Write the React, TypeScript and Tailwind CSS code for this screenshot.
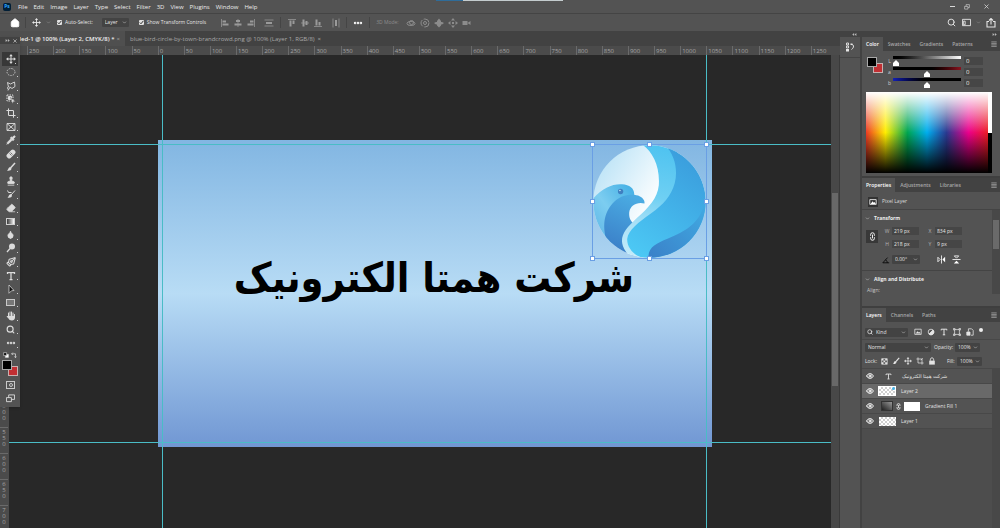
import { clsx } from "clsx";
import {
  ChevronDown,
  Crop,
  Droplet,
  Ellipsis,
  Eraser,
  Eye,
  House,
  Link2,
  PenTool,
  Pipette,
  Search,
  Stamp,
} from "lucide-react";
import type { ReactNode } from "react";

const MENUS = ["File", "Edit", "Image", "Layer", "Type", "Select", "Filter", "3D", "View", "Plugins", "Window", "Help"];

// ruler labels, one every 50 px of the document
const H_MARKS = Array.from({ length: 31 }, (_, i) => Math.abs(i * 50 - 250));
const V_MARKS = Array.from({ length: 18 }, (_, i) => Math.abs(i * 50 - 150));

const TITLE = "شرکت همتا الکترونیک";

function Glyph({ children, className }: { children: ReactNode; className?: string }) {
  return (
    <svg viewBox="0 0 20 20" fill="none" stroke="currentColor" strokeWidth="2" className={clsx("shrink-0", className ?? "size-[10px]")}>
      {children}
    </svg>
  );
}

function MoveIcon({ className }: { className?: string }) {
  return (
    <Glyph className={className}>
      <path d="M10 3v14M3 10h14" />
      <path d="M10 0l3.500 4.500h-7zM10 20l3.500-4.500h-7zM0 10l4.500-3.500v7zM20 10l-4.500-3.500v7z" fill="currentColor" stroke="none" />
    </Glyph>
  );
}

function TypeIcon({ className }: { className?: string }) {
  return (
    <Glyph className={className}>
      <path d="M3 6V3h14v3M10 3v14M7 17h6" strokeWidth="2.500" />
    </Glyph>
  );
}

function BrushIcon({ className }: { className?: string }) {
  return (
    <Glyph className={className}>
      <path d="M18 2L9 12" strokeWidth="3" />
      <path d="M8 10l3 3c0 4-5 5-9 4 3-1 2-6 6-7z" fill="currentColor" stroke="none" />
    </Glyph>
  );
}

function MenuLines() {
  return (
    <button type="button" aria-label="Panel menu" className="mr-[3px] ml-auto text-[#a8a8a8]">
      <Glyph className="size-[6px]">
        <path d="M1 3h18M1 8h18M1 13h18M1 18h18" strokeWidth="2.500" />
      </Glyph>
    </button>
  );
}

function DoubleArrow({ flip }: { flip?: boolean }) {
  return (
    <svg viewBox="0 0 12 8" fill="currentColor" className={clsx("h-[3px] w-[5px]", flip && "rotate-180")}>
      <path d="M5 0v8L0 4zM11 0v8L6 4z" />
    </svg>
  );
}

const TOOLS: { name: string; icon: ReactNode; active?: boolean }[] = [
  { name: "Move", icon: <MoveIcon />, active: true },
  {
    name: "Elliptical marquee",
    icon: (
      <Glyph>
        <ellipse cx="10" cy="10" rx="8" ry="7" strokeDasharray="3 2" strokeWidth="1.500" />
      </Glyph>
    ),
  },
  {
    name: "Lasso",
    icon: (
      <Glyph>
        <path d="M5 12L3 3l6 3 8-4 1 9-6 4-4-3M5 12c-3 0-3 4 0 4s4-4 1-4M5 16l-1 3" strokeWidth="1.800" />
      </Glyph>
    ),
  },
  {
    name: "Object selection",
    icon: (
      <Glyph>
        <path d="M2 2h12v12H2z" strokeDasharray="3 2" />
        <path d="M5 5h6v6H5z" fill="currentColor" />
        <path d="M9 7l10 8-4 .500-2 4z" fill="currentColor" stroke="#535353" strokeWidth="1" />
      </Glyph>
    ),
  },
  { name: "Crop", icon: <Crop className="size-[10px]" strokeWidth={2.5} /> },
  {
    name: "Frame",
    icon: (
      <Glyph>
        <path d="M2 3h16v14H2zM2 3l16 14M18 3L2 17" strokeWidth="1.800" />
      </Glyph>
    ),
  },
  { name: "Eyedropper", icon: <Pipette className="size-[10px] fill-current" /> },
  {
    name: "Healing brush",
    icon: (
      <Glyph>
        <rect x="0" y="5" width="20" height="10" rx="4" fill="currentColor" stroke="none" transform="rotate(-45 10 10)" />
        <path d="M7 9l4 4M9 7l4 4" stroke="#535353" strokeWidth="1.500" />
      </Glyph>
    ),
  },
  { name: "Brush", icon: <BrushIcon /> },
  { name: "Clone stamp", icon: <Stamp className="size-[10px] fill-current" /> },
  {
    name: "History brush",
    icon: (
      <Glyph>
        <path d="M18 3l-8 9M3 3l2 4h6" />
        <path d="M9 10l3 3c0 4-5 5-9 4 3-1 2-6 6-7z" fill="currentColor" stroke="none" />
      </Glyph>
    ),
  },
  { name: "Eraser", icon: <Eraser className="size-[10px] fill-current stroke-[#cfcfcf]" /> },
  { name: "Gradient", icon: <span className="h-[7px] w-[9px] border border-[#d0d0d0] bg-linear-to-r from-[#3a3a3a] to-white" /> },
  { name: "Blur", icon: <Droplet className="size-[9px] fill-current" /> },
  {
    name: "Dodge",
    icon: (
      <Glyph>
        <circle cx="12" cy="7" r="6" fill="currentColor" stroke="none" />
        <path d="M8 11l-6 7" strokeWidth="2.500" />
      </Glyph>
    ),
  },
  { name: "Pen", icon: <PenTool className="size-[10px] rotate-90" strokeWidth={2.5} /> },
  { name: "Type", icon: <TypeIcon /> },
  {
    name: "Path selection",
    icon: (
      <Glyph>
        <path d="M6 2l10 11-5 .500-5 5z" fill="#111" strokeWidth="1.500" />
      </Glyph>
    ),
  },
  { name: "Rectangle", icon: <span className="h-[7px] w-[9px] border border-[#c8c8c8] bg-[#777]" /> },
  {
    name: "Hand",
    icon: (
      <Glyph>
        <path d="M5 11V4M8 10V2M11 10V2M14 11V4M17 12V7" strokeLinecap="round" />
        <path d="M4 10h14v3c0 4-3 6-6 6-4 0-6-2-7-4l-4-4 2-1z" fill="currentColor" stroke="none" />
      </Glyph>
    ),
  },
  { name: "Zoom", icon: <Search className="size-[9px]" strokeWidth={3} /> },
  { name: "Edit toolbar", icon: <Ellipsis className="size-[10px]" strokeWidth={4} /> },
];

function Swatches({ className }: { className?: string }) {
  return (
    <div className={clsx("relative h-[16px] w-[16px] shrink-0", className)}>
      <span className="absolute right-0 bottom-0 size-[10px] border border-[#c8b0b0] bg-[#c12f33]" />
      <span className="absolute top-0 left-0 size-[10px] border border-[#a8a8a8] bg-black" />
    </div>
  );
}

function Toolbox() {
  return (
    <aside className="absolute top-[37px] left-0 w-[20px] bg-[#535353] pb-px text-[#dcdcdc] shadow">
      <div className="flex h-[7px] items-center justify-between bg-[#424242] pr-[3px] pl-[5px] text-[#b8b8b8]">
        <DoubleArrow flip />
        <button type="button" aria-label="Close tools">
          <Glyph className="size-[4px]">
            <path d="M2 2l16 16M18 2L2 18" strokeWidth="4" />
          </Glyph>
        </button>
      </div>
      <div className="mt-[8px] flex h-[298px] flex-col">
        {TOOLS.map((t) => (
          <button
            key={t.name}
            type="button"
            aria-label={t.name}
            className={clsx("relative flex flex-1 items-center justify-center pl-px", t.active && "mx-[2px] bg-[#383838]")}
          >
            {t.icon}
            <span className="absolute right-[2px] bottom-[2px] size-px bg-[#cfcfcf]" />
          </button>
        ))}
      </div>
      <div className="flex items-center justify-between px-[3px] pt-[2px]">
        <Glyph className="size-[6px]">
          <path d="M8 8h10v10H8z" fill="#fff" />
          <path d="M2 2h10v10H2z" fill="#111" />
        </Glyph>
        <Glyph className="size-[6px]">
          <path d="M2 6h13v13M6 2L2 6l4 4M11 15l4 4 4-4" strokeWidth="2.500" />
        </Glyph>
      </div>
      <Swatches className="mt-[2px] ml-[2px]" />
      <div className="mt-[5px] flex flex-col items-center gap-[5px] pb-[3px] pl-px">
        <button type="button" aria-label="Quick mask" className="flex h-[8px] w-[9px] items-center justify-center border border-[#c8c8c8]">
          <span className="size-[4px] rounded-full border border-[#c8c8c8]" />
        </button>
        <button type="button" aria-label="Screen mode">
          <Glyph className="size-[9px]">
            <path d="M6 2h13v10H6z" />
            <path d="M1 8h11v9H1z" fill="#535353" />
          </Glyph>
        </button>
      </div>
    </aside>
  );
}

function Check({ label }: { label: string }) {
  return (
    <label className="flex items-center gap-[3px] font-medium whitespace-nowrap">
      <span className="relative flex">
        <input type="checkbox" defaultChecked className="size-[5px] appearance-none rounded-[1px] bg-[#e2e2e2]" />
        <Glyph className="pointer-events-none absolute size-[5px] text-[#333]">
          <path d="M3 10l5 5 9-11" strokeWidth="4" />
        </Glyph>
      </span>
      {label}
    </label>
  );
}

function Dropdown({ label, value, className, icon }: { label: string; value: string; className: string; icon?: ReactNode }) {
  return (
    <span className={clsx("relative flex h-[9px] shrink-0 items-center rounded-[1px] bg-[#434343] text-[#e6e6e6]", className)}>
      {icon}
      <select aria-label={label} className="h-full min-w-0 flex-1 appearance-none pl-[3px] outline-none">
        <option>{value}</option>
      </select>
      <ChevronDown className="pointer-events-none mr-[2px] size-[5px] shrink-0 text-[#bbb]" strokeWidth={3} />
    </span>
  );
}

// d is the edge line of an align button, b its two blocks
const ALIGN = [
  { name: "Align left", d: "M3 2v16", b: "M5 5h7v4H5zM5 11h12v4H5z" },
  { name: "Align centers", d: "M10 2v16", b: "M6 4h8v4H6zM3 11h14v4H3z" },
  { name: "Align right", d: "M17 2v16", b: "M8 5h7v4H8zM3 11h12v4H3z" },
  { name: "Distribute", d: "M1 4h18M1 16h18", b: "M4 8h12v4H4z" },
];
const VALIGN = [
  { name: "Align top", d: "M2 3h16", b: "M5 5h4v12H5zM11 5h4v7h-4z" },
  { name: "Align middle", d: "M2 10h16", b: "M5 3h4v14H5zM11 6h4v8h-4z" },
  { name: "Align bottom", d: "M2 17h16", b: "M5 3h4v12H5zM11 8h4v7h-4z" },
  { name: "Distribute columns", d: "M4 1v18M16 1v18", b: "M8 4h4v12H8z" },
];

function AlignGroup({ items }: { items: typeof ALIGN }) {
  return (
    <div className="flex gap-[3px] text-[#9a9a9a]">
      {items.map((a, i) => (
        <button key={a.name} type="button" aria-label={a.name} className={clsx(i === 3 && "ml-[5px]")}>
          <Glyph>
            <path d={a.d} strokeWidth="1.500" />
            <path d={a.b} fill="currentColor" stroke="none" />
          </Glyph>
        </button>
      ))}
    </div>
  );
}

function Divider() {
  return <span className="h-[11px] w-px bg-[#454545]" />;
}

function TopBars() {
  return (
    <header className="shrink-0">
      <div className="relative flex h-[13px] items-center pl-[3px] text-[6px] font-medium text-[#ececec]">
        <span className="mr-[4px] flex h-[8px] w-[8px] items-center justify-center rounded-[2px] bg-[#001e36] text-[5px] font-bold text-[#31a8ff]">Ps</span>
        <nav className="flex">
          {MENUS.map((m) => (
            <button key={m} type="button" className="px-[3px]">
              {m}
            </button>
          ))}
        </nav>
        <span className="absolute top-0 left-[436px] flex h-px w-[127px] bg-[#c4ccce]">
          <span className="w-[27px] bg-[#2f6c99]" />
        </span>
        <div className="ml-auto flex items-center gap-[9px] pr-[11px] text-[#d8d8d8]">
          <button type="button" aria-label="Minimize" className="h-px w-[5px] bg-current" />
          <button type="button" aria-label="Restore">
            <Glyph className="size-[6px]">
              <path d="M7 2h11v10H7z" />
              <path d="M2 8h11v9H2z" fill="#535353" />
            </Glyph>
          </button>
          <button type="button" aria-label="Close" className="ml-[5px]">
            <Glyph className="size-[5px]">
              <path d="M2 2l16 16M18 2L2 18" strokeWidth="3" />
            </Glyph>
          </button>
        </div>
      </div>
      <div className="flex h-[18px] items-center border-t border-[#444] pl-[10px] text-[5px] text-[#e6e6e6]">
        <House className="size-[10px] fill-white text-white" />
        <span className="mx-[5px] flex">
          <Divider />
        </span>
        <MoveIcon className="ml-px size-[9px]" />
        <ChevronDown className="mr-[6px] ml-[5px] size-[5px] text-[#aaa]" />
        <Check label="Auto-Select:" />
        <Dropdown label="Auto-select target" value="Layer" className="mr-[10px] ml-[9px] w-[27px]" />
        <Check label="Show Transform Controls" />
        <span className="ml-[14px] flex items-center gap-[6px]">
          <AlignGroup items={ALIGN} />
          <Divider />
          <AlignGroup items={VALIGN} />
        </span>
        <span className="ml-[5px] flex items-center gap-[6px]">
          <Divider />
          <Ellipsis className="size-[10px] text-white" strokeWidth={4} />
          <Divider />
        </span>
        <span className="ml-[6px] whitespace-nowrap text-[#8c8c8c]">3D Mode:</span>
        <div className="ml-[7px] flex gap-[4px] text-[#8c8c8c]">
          <Glyph>
            <ellipse cx="10" cy="11" rx="8" ry="4" />
            <circle cx="11" cy="9" r="4" />
          </Glyph>
          <Glyph>
            <circle cx="10" cy="10" r="8" strokeDasharray="14 3" />
            <circle cx="10" cy="10" r="3" />
          </Glyph>
          <Glyph>
            <path d="M10 1l4 5v2h2l4 2-4 3h-2v2l-4 4-4-4v-2H4l-4-3 4-2h2V6z" fill="currentColor" stroke="none" />
          </Glyph>
          <Glyph>
            <path d="M10 0l4 5H6zM10 20l4-5H6zM0 10l5-4v8zM20 10l-5-4v8zM8 8h4v4H8z" fill="currentColor" stroke="none" />
          </Glyph>
          <Glyph>
            <path d="M1 6h10v8H1zM11 10l6-4v8z" fill="currentColor" stroke="none" />
          </Glyph>
        </div>
        <div className="ml-auto flex items-center gap-[5px] pr-[4px]">
          <Search className="size-[9px]" strokeWidth={2.5} />
          <Glyph className="ml-px size-[9px]">
            <path d="M1 3h18v14H1zM3 7h4v8H3z" />
          </Glyph>
          <ChevronDown className="size-[5px] text-[#aaa]" />
          <Glyph className="size-[10px]">
            <path d="M6 7H2v11h16V7h-4M10 13V2M6 5l4-4 4 4" strokeWidth="2.200" />
          </Glyph>
        </div>
      </div>
    </header>
  );
}

function DocTabs() {
  return (
    <div role="tablist" className="flex h-[15px] shrink-0 bg-[#424242] text-[6px] whitespace-nowrap">
      <div className="flex w-[125px] items-center gap-[2px] bg-[#4f4f4f] pl-[17px] font-semibold text-[#f0f0f0]">
        <button type="button" role="tab" aria-selected="true">
          tled-1 @ 100% (Layer 2, CMYK/8) *
        </button>
        <span className="font-normal text-[#a0a0a0]">×</span>
      </div>
      <div className="flex items-center gap-[3px] pl-[5px] text-[#a8a8a8]">
        <button type="button" role="tab" aria-selected="false">
          blue-bird-circle-by-town-brandcrowd.png @ 100% (Layer 1, RGB/8)
        </button>
        <span>×</span>
      </div>
    </div>
  );
}

function BirdLogo() {
  return (
    <svg viewBox="38 44 340 340" className="size-full">
      <defs>
        <clipPath id="disc">
          <circle cx="208" cy="214" r="169" />
        </clipPath>
        <linearGradient id="sky" x1="0" y1="0.200" x2="0.550" y2="0.550">
          <stop offset="0" stopColor="#b9e2f6" />
          <stop offset="1" stopColor="#ffffff" />
        </linearGradient>
        <linearGradient id="head" x1="0.900" y1="0.100" x2="0.100" y2="0.900">
          <stop offset="0" stopColor="#4bb3e6" />
          <stop offset="0.500" stopColor="#7ccdf0" />
          <stop offset="1" stopColor="#5fb6e6" />
        </linearGradient>
        <linearGradient id="body" x1="0.600" y1="0" x2="0.300" y2="1">
          <stop offset="0" stopColor="#4aabe2" />
          <stop offset="1" stopColor="#3a7cc6" />
        </linearGradient>
        <linearGradient id="band" x1="0.400" y1="0" x2="0.300" y2="1">
          <stop offset="0" stopColor="#4fc3f0" />
          <stop offset="0.450" stopColor="#6fd0f3" />
          <stop offset="0.700" stopColor="#a8e0f6" />
          <stop offset="1" stopColor="#c4ebfa" />
        </linearGradient>
        <linearGradient id="wing" x1="0.700" y1="0" x2="0.200" y2="1">
          <stop offset="0" stopColor="#3a9bdb" />
          <stop offset="0.500" stopColor="#42b1e8" />
          <stop offset="1" stopColor="#4cc8f4" />
        </linearGradient>
        <linearGradient id="tail" x1="1" y1="0" x2="0" y2="1">
          <stop offset="0" stopColor="#41ade4" />
          <stop offset="1" stopColor="#3a80c8" />
        </linearGradient>
      </defs>
      <g clipPath="url(#disc)">
        <path d="M38 44h340v340H38z" fill="url(#sky)" />
        <path d="M30 216C60 175 95 160 125 162C152 164 166 178 161 200L125 225L100 340L30 330z" fill="url(#head)" />
        <path d="M78 330C62 270 80 235 105 212C130 190 165 192 178 198C190 204 194 212 193 220C170 214 150 226 147 246C146 262 150 270 158 278C130 305 128 340 142 376C110 366 88 350 78 330z" fill="url(#body)" />
        <path d="M182 40C215 60 240 105 236 165C232 205 205 232 170 264C135 296 118 320 128 348C134 364 142 374 160 384L230 384L300 200L290 44z" fill="url(#band)" />
        <path d="M250 40C285 70 294 120 284 158C272 200 250 222 212 250C175 276 144 300 141 326C139 350 160 378 190 384L384 384L384 40z" fill="url(#wing)" />
        <path d="M205 386C202 352 228 340 262 326C320 302 355 280 372 226L384 210L384 386z" fill="url(#tail)" />
      </g>
      <circle cx="121" cy="184" r="8" fill="#3f7fc0" />
      <circle cx="119" cy="181" r="2.500" fill="#bfe3f6" />
    </svg>
  );
}

const HANDLES = [
  "-top-[3px] -left-[3px]",
  "-top-[3px] left-[54px]",
  "-top-[3px] -right-[3px]",
  "top-[54px] -left-[3px]",
  "top-[54px] -right-[3px]",
  "-bottom-[3px] -left-[3px]",
  "-bottom-[3px] left-[54px]",
  "-bottom-[3px] -right-[3px]",
];

function Workspace() {
  return (
    <main className="flex min-w-0 flex-1 flex-col">
      <DocTabs />
      <div className="flex h-[9px] shrink-0 overflow-hidden bg-[#4b4b4b] pr-[3px] pl-[27px] text-[6px] leading-[10px] text-[#a6a6a6]">
        {H_MARKS.map((n, i) => (
          <span key={i} className="min-w-0 flex-1 border-l border-[#6a6a6a] pl-px">
            {n}
          </span>
        ))}
      </div>
      <div className="flex min-h-0 flex-1">
        <div className="flex w-[9px] shrink-0 flex-col overflow-hidden bg-[#4b4b4b] pt-[8px] text-[6px] leading-[6px] text-[#a6a6a6]">
          {V_MARKS.map((n, i) => (
            <span key={i} className="h-[26px] w-[8px] shrink-0 border-t border-[#6a6a6a] pt-px text-center">
              {String(n)
                .split("")
                .map((c, k) => (
                  <span key={k} className="block">
                    {c}
                  </span>
                ))}
            </span>
          ))}
        </div>
        <div className="relative min-w-0 flex-1 overflow-hidden bg-[#282828]">
          <div className="absolute top-[85px] left-[149px] h-[307px] w-[554px] bg-linear-to-b from-[#82b6e2] via-[#b8dcf5] to-[#7197d3]">
            <p
              dir="rtl"
              lang="fa"
              className="absolute top-[108px] right-[78px] font-['DejaVu_Sans_Condensed','DejaVu_Sans',sans-serif] text-[41px] leading-[60px] font-bold whitespace-nowrap text-black"
            >
              {TITLE}
            </p>
          </div>
          <span className="absolute inset-y-0 left-[153px] w-px bg-[#4abcc6]" />
          <span className="absolute inset-y-0 left-[697px] w-px bg-[#4abcc6]" />
          <span className="absolute inset-x-0 top-[89px] h-px bg-[#4abcc6]" />
          <span className="absolute inset-x-0 top-[387px] h-px bg-[#4abcc6]" />
          <div className="absolute top-[89px] left-[583px] size-[115px] border border-[#6a9fe4]">
            <BirdLogo />
            {HANDLES.map((h) => (
              <span key={h} className={clsx("absolute size-[5px] border border-[#6a9fe4] bg-white", h)} />
            ))}
          </div>
        </div>
        <div className="w-[9px] shrink-0 border-r border-[#3a3a3a] bg-[#484848] pt-[138px]">
          <div className="mx-px h-[193px] bg-[#686868]" />
        </div>
      </div>
    </main>
  );
}

function PanelTabs({ tabs }: { tabs: string[] }) {
  return (
    <div role="tablist" className="flex h-[14px] shrink-0 items-center gap-px bg-[#424242] text-[5px] font-semibold text-[#a8a8a8]">
      {tabs.map((t, i) => (
        <button
          key={t}
          type="button"
          role="tab"
          aria-selected={i === 0}
          className={clsx("h-full px-[4px]", i === 0 && "bg-[#535353] text-white")}
        >
          {t}
        </button>
      ))}
      <MenuLines />
    </div>
  );
}

const SLIDERS = [
  { name: "L", track: "bg-linear-to-r from-black to-white", value: 0 },
  { name: "a", track: "bg-linear-to-r from-black via-black to-[#8a1420]", value: 50 },
  { name: "b", track: "bg-linear-to-r from-[#1420b4] via-black to-black", value: 50 },
];

function ColorPanel() {
  return (
    <section className="shrink-0 border-b-2 border-[#3f3f3f] pb-[3px]">
      <PanelTabs tabs={["Color", "Swatches", "Gradients", "Patterns"]} />
      <div className="flex pt-[5px] pl-[5px]">
        <Swatches className="mt-px" />
        <div className="ml-[3px] flex flex-1 flex-col gap-px text-[5px] text-[#cfcfcf]">
          {SLIDERS.map((s) => (
            <div key={s.name} className="flex h-[10px] items-center">
              <label htmlFor={"lab-" + s.name} className="w-[7px] text-center">
                {s.name}
              </label>
              <input
                id={"lab-" + s.name}
                type="range"
                defaultValue={s.value}
                className={clsx(
                  "h-[10px] w-[68px] appearance-none bg-[length:100%_3px] bg-no-repeat [&::-webkit-slider-runnable-track]:h-[10px] [&::-webkit-slider-thumb]:mt-[4px] [&::-webkit-slider-thumb]:h-[6px] [&::-webkit-slider-thumb]:w-[6px] [&::-webkit-slider-thumb]:appearance-none [&::-webkit-slider-thumb]:bg-white [&::-webkit-slider-thumb]:[clip-path:polygon(50%_0,100%_50%,100%_100%,0_100%,0_50%)]",
                  s.track,
                )}
              />
              <input aria-label={s.name + " value"} defaultValue="0" className="ml-[3px] h-[8px] w-[19px] bg-[#464646] pl-[2px] text-[6px] text-[#e6e6e6]" />
            </div>
          ))}
        </div>
      </div>
      <div className="mt-[4px] mr-[8px] ml-[4px] flex h-[81px]">
        <div className="flex-1 bg-[linear-gradient(to_bottom,white,transparent_50%,black),linear-gradient(to_right,#ee3a24,#ffee00_16%,#00a651_34%,#00aeef_50%,#2b3990_66%,#ec008c_84%,#ed1c24)]" />
        <div className="w-[4px] bg-[linear-gradient(white_50%,black_50%)]" />
      </div>
    </section>
  );
}

function Field({ label, value }: { label: string; value: string }) {
  return (
    <label className="flex items-center text-[#b4b4b4]">
      <span className="w-[10px] text-center">{label}</span>
      <input defaultValue={value} className="h-[8px] w-[27px] bg-[#464646] pl-[2px] font-medium text-[#e6e6e6]" />
    </label>
  );
}

function SectionTitle({ children }: { children: ReactNode }) {
  return (
    <h3 className="flex h-[16px] items-center gap-[4px] pl-[3px] font-bold text-[#eee]">
      <ChevronDown className="size-[5px] text-[#bbb]" strokeWidth={3} />
      {children}
    </h3>
  );
}

function PropertiesPanel() {
  return (
    <section className="shrink-0 border-b-2 border-[#3f3f3f] text-[5px]">
      <PanelTabs tabs={["Properties", "Adjustments", "Libraries"]} />
      <div className="flex h-[18px] items-center gap-[4px] border-b border-[#444] pt-[2px] pl-[6px] text-[#dcdcdc]">
        <span className="flex size-[10px] items-center justify-center bg-[#333]">
          <Glyph className="size-[8px] text-white">
            <path d="M2 4h16v12H2z" />
            <path d="M4 15l5-7 3 4 2-2 3 5z" fill="currentColor" stroke="none" />
          </Glyph>
        </span>
        Pixel Layer
      </div>
      <div className="flex">
        <div className="flex-1">
          <div className="h-[61px] border-b border-[#444]">
            <SectionTitle>Transform</SectionTitle>
            <div className="flex pt-px pl-[4px]">
              <button type="button" aria-label="Link width and height" className="mt-[3px] flex h-[13px] w-[12px] items-center justify-center bg-[#383838] text-white">
                <Link2 className="size-[9px] rotate-90" strokeWidth={2.5} />
              </button>
              <div className="ml-[4px] flex flex-col gap-[5px]">
                <div className="flex gap-[6px]">
                  <Field label="W" value="219 px" />
                  <Field label="X" value="834 px" />
                </div>
                <div className="flex gap-[6px]">
                  <Field label="H" value="218 px" />
                  <Field label="Y" value="9 px" />
                </div>
                <div className="mt-[2px] flex items-center">
                  <Glyph className="size-[8px]">
                    <path d="M18 17H2L14 4M9 10c3 1 4 4 4 7" />
                  </Glyph>
                  <Dropdown label="Angle" value="0.00°" className="ml-[2px] w-[28px]" />
                  <span className="ml-[17px] flex gap-[6px] text-white">
                    <Glyph className="size-[9px]">
                      <path d="M10 1v18M2 5v10l5-5z" strokeWidth="1.800" />
                      <path d="M18 4v12l-6-6z" fill="currentColor" stroke="none" />
                    </Glyph>
                    <Glyph className="size-[9px]">
                      <path d="M1 10h18M5 2h10l-5 5z" strokeWidth="1.800" />
                      <path d="M4 19h12l-6-6z" fill="currentColor" stroke="none" />
                    </Glyph>
                  </span>
                </div>
              </div>
            </div>
          </div>
          <SectionTitle>Align and Distribute</SectionTitle>
          <p className="flex h-[19px] items-start pt-px pl-[5px] text-[#c8c8c8]">Align:</p>
        </div>
        <div className="mb-[12px] w-[8px] bg-[#484848] px-px pt-[10px]">
          <div className="h-[29px] bg-[#6a6a6a]" />
        </div>
      </div>
    </section>
  );
}

const CHECKER = "bg-[#fff] bg-[repeating-conic-gradient(#cfcfcf_0_25%,white_0_50%)] bg-[length:4px_4px]";

function LayerRow({ name, children, selected, rtl }: { name: string; children: ReactNode; selected?: boolean; rtl?: boolean }) {
  return (
    <li className={clsx("flex h-[15px] items-center border-b border-[#484848]", selected ? "bg-[#696969]" : "bg-[#535353]")}>
      <button type="button" aria-label="Toggle visibility" className="flex w-[16px] shrink-0 justify-center">
        <Eye className="size-[8px] text-white" strokeWidth={3} />
      </button>
      {children}
      <span lang={rtl ? "fa" : undefined} className="font-medium whitespace-nowrap">
        {name}
      </span>
    </li>
  );
}

function LayersPanel() {
  return (
    <section className="flex min-h-0 flex-1 flex-col text-[5px] text-[#e4e4e4]">
      <PanelTabs tabs={["Layers", "Channels", "Paths"]} />
      <div className="flex h-[18px] shrink-0 items-center border-b border-[#484848] pt-[3px] pl-[3px]">
        <Dropdown label="Filter kind" value="Kind" className="w-[43px]" icon={<Search className="ml-[2px] size-[6px]" strokeWidth={3} />} />
        <div className="ml-[6px] flex items-center gap-[5px]">
          <Glyph className="size-[8px]">
            <path d="M2 3h16v13H2z" />
            <path d="M4 14l5-6 3 3 2-1 3 4z" fill="currentColor" stroke="none" />
          </Glyph>
          <Glyph className="size-[8px]">
            <circle cx="10" cy="10" r="7" />
            <path d="M15 5A7 7 0 0 1 5 15z" fill="currentColor" />
          </Glyph>
          <TypeIcon className="size-[8px]" />
          <Glyph className="size-[8px]">
            <path d="M4 4h12v12H4zM1 1h4v4H1zM15 1h4v4h-4zM1 15h4v4H1zM15 15h4v4h-4z" strokeWidth="1.800" />
          </Glyph>
          <Glyph className="size-[8px]">
            <path d="M6 9V2h8l4 4v12h-6" />
            <path d="M2 10h8v8H2z" fill="currentColor" />
          </Glyph>
          <span className="mb-[4px] size-[4px] rounded-full bg-[#eee]" />
        </div>
      </div>
      <div className="flex h-[14px] shrink-0 items-center pl-[3px]">
        <Dropdown label="Blend mode" value="Normal" className="w-[66px]" />
        <span className="ml-[3px] w-[20px] whitespace-nowrap">Opacity:</span>
        <Dropdown label="Opacity" value="100%" className="ml-px w-[25px]" />
      </div>
      <div className="flex h-[15px] shrink-0 items-center border-b border-[#484848] pl-[3px]">
        <span className="w-[13px]">Lock:</span>
        <div className="ml-[3px] flex items-center gap-[4px]">
          <Glyph className="size-[7px]">
            <path d="M2 2h16v16H2z" />
            <path d="M2 2h5v5H2zM12 2h5v5h-5zM7 7h5v5H7zM2 12h5v5H2zM12 12h5v5h-5z" fill="currentColor" stroke="none" />
          </Glyph>
          <BrushIcon className="size-[8px]" />
          <MoveIcon className="size-[8px]" />
          <Glyph className="size-[8px]">
            <path d="M5 1v14h14M1 5h14v14M12 8l5-5" strokeWidth="1.800" />
          </Glyph>
          <Glyph className="size-[8px]">
            <path d="M6 9V6c0-5 8-5 8 0v3" strokeWidth="2.500" />
            <path d="M3 9h14v10H3z" fill="currentColor" stroke="none" />
          </Glyph>
        </div>
        <span className="ml-[11px] w-[9px]">Fill:</span>
        <Dropdown label="Fill" value="100%" className="ml-px w-[25px]" />
      </div>
      <div className="flex min-h-0 flex-1 bg-[#4d4d4d]">
        <ul className="flex-1">
          <LayerRow name={TITLE} rtl>
            <TypeIcon className="mr-[10px] ml-[7px] size-[7px]" />
          </LayerRow>
          <LayerRow name="Layer 2" selected>
            <span className={clsx("mr-[5px] flex h-[10px] w-[18px] justify-end border border-white", CHECKER)}>
              <span className="size-[3px] rounded-full bg-[#42b1e8]" />
            </span>
          </LayerRow>
          <LayerRow name="Gradient Fill 1">
            <span className="ml-[3px] h-[10px] w-[12px] border border-[#333] bg-linear-to-tr from-[#222] to-[#999]" />
            <Link2 className="mx-[2px] size-[7px] rotate-90" strokeWidth={3} />
            <span className="mr-[5px] h-[9px] w-[16px] bg-white" />
          </LayerRow>
          <LayerRow name="Layer 1">
            <span className={clsx("mr-[5px] ml-px h-[9px] w-[17px]", CHECKER)} />
          </LayerRow>
        </ul>
        <div className="w-[8px] bg-[#484848]" />
      </div>
    </section>
  );
}

export default function App() {
  return (
    <div className="relative flex h-screen w-full flex-col overflow-hidden bg-[#535353] font-['Open_Sans','DejaVu_Sans',sans-serif] leading-none">
      <TopBars />
      <div className="flex min-h-0 flex-1">
        <Workspace />
        <aside className="w-[22px] shrink-0 border-r-2 border-[#424242]">
          <div className="flex h-[6px] items-center justify-end bg-[#424242] pr-[3px] text-[#b8b8b8]">
            <DoubleArrow />
          </div>
          <button type="button" aria-label="History" className="flex h-[21px] w-full items-center justify-center border-b border-[#444] text-[#e6e6e6]">
            <Glyph>
              <path d="M3 2h4v4H3zM3 8h4v4H3z" strokeWidth="1.800" />
              <path d="M2 14h6v5H2zM11 3h4v3h-4z" fill="currentColor" stroke="none" />
              <path d="M12 5c6-1 7 6 1 10" />
            </Glyph>
          </button>
        </aside>
        <div className="flex w-[138px] shrink-0 flex-col">
          <div className="flex h-[6px] shrink-0 items-center justify-end bg-[#424242] pr-[3px] text-[#b8b8b8]">
            <DoubleArrow flip />
          </div>
          <ColorPanel />
          <PropertiesPanel />
          <LayersPanel />
        </div>
      </div>
      <Toolbox />
    </div>
  );
}
